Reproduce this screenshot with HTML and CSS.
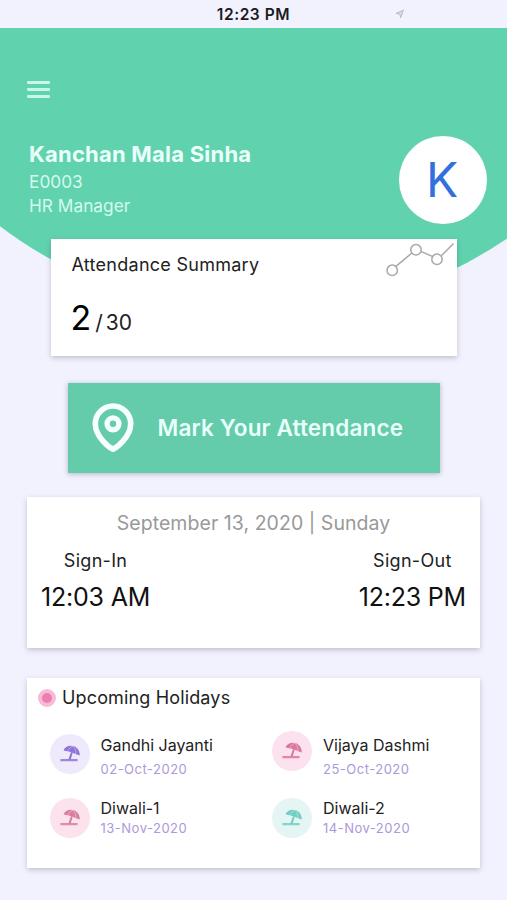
FILE: index.html
```html
<!DOCTYPE html>
<html lang="en">
<head>
  <meta charset="UTF-8">
  <meta name="viewport" content="width=device-width, initial-scale=1.0">
  <title>Attendance</title>
  <link rel="stylesheet" href="styles.css">
</head>
<body>
  <!-- Umbrella icon shared by the holiday list -->
  <svg class="icon-defs" width="0" height="0">
    <symbol id="umbrella" viewBox="0 0 20 18">
      <path d="M3.800 4.600C6 .8 10.200-.2 14 1.300c3.800 1.500 6 5.200 5.700 9.300l-4.200-1.600-2.400-.9-3.300-1.300-6-1.200z"/>
      <path d="M8 5.900C9 3.500 10.800 1.900 12.900 1.300M15.600 8.900c.7-2.800-.3-5.600-2.300-7.400" fill="none" stroke="#fff" stroke-width=".7" opacity=".55"/>
      <path d="M11 7l1.700.7-2.100 7H8.300z"/>
      <rect x=".4" y="14" width="17.200" height="2.200" rx=".5" opacity=".85"/>
    </symbol>
  </svg>

  <div class="status-bar">
    <span class="status-time">12:23 PM</span>
    <svg class="location-arrow" width="10" height="10" viewBox="0 0 10 10">
      <path d="M8.500 1L1 4.400l3.800.8.900 3.600z" fill="#d9d9e0" stroke="#b4b4bc" stroke-width=".8"/>
    </svg>
  </div>

  <header class="header">
    <button class="menu-button" aria-label="Menu">
      <span></span>
      <span></span>
      <span></span>
    </button>
    <div class="profile">
      <div class="profile-details">
        <h1>Kanchan Mala Sinha</h1>
        <p class="emp-id">E0003</p>
        <p class="emp-role">HR Manager</p>
      </div>
      <div class="avatar">K</div>
    </div>
  </header>

  <main>
    <!-- Attendance Summary -->
    <section class="card summary-card">
      <div class="summary-details">
        <h2>Attendance Summary</h2>
        <p class="summary-count"><span class="present">2</span><span class="slash">/</span><span class="total">30</span></p>
      </div>
      <svg class="chart-icon" width="70" height="38" viewBox="0 0 70 38" fill="none" stroke="#a9a9a9" stroke-width="1.500">
        <path d="M9.900 27.400L25.900 14M34.900 12.400l12 5.200M55.600 16.500L67.500 4.500"/>
        <circle cx="6.200" cy="31.300" r="5.200"/>
        <circle cx="30" cy="10.800" r="5.200"/>
        <circle cx="51" cy="20.300" r="5.200"/>
      </svg>
    </section>

    <button class="mark-button">
      <svg width="42" height="50" viewBox="0 0 42 50" fill="none" stroke="#f6ffff">
        <path d="M21 46.300C17.500 44.500 3.300 34 3.300 20.700a17.700 17.700 0 0 1 35.400 0C38.700 34 24.500 44.500 21 46.300z" stroke-width="5.600" stroke-linejoin="round"/>
        <circle cx="21" cy="20.800" r="5.900" stroke-width="5.400"/>
      </svg>
      <span>Mark Your Attendance</span>
    </button>

    <!-- Sign in / Sign out times -->
    <section class="card time-card">
      <p class="date">September 13, 2020 | Sunday</p>
      <div class="times">
        <div class="time">
          <p class="time-label">Sign-In</p>
          <p class="time-value">12:03 AM</p>
        </div>
        <div class="time">
          <p class="time-label">Sign-Out</p>
          <p class="time-value">12:23 PM</p>
        </div>
      </div>
    </section>

    <!-- Upcoming Holidays -->
    <section class="card holiday-card">
      <h2><span class="dot"></span>Upcoming Holidays</h2>
      <ul class="holiday-list">
        <li class="holiday">
          <span class="holiday-icon purple"><svg width="20" height="18"><use href="#umbrella"/></svg></span>
          <div>
            <h3>Gandhi Jayanti</h3>
            <p>02-Oct-2020</p>
          </div>
        </li>
        <li class="holiday raised">
          <span class="holiday-icon pink"><svg width="20" height="18"><use href="#umbrella"/></svg></span>
          <div>
            <h3>Vijaya Dashmi</h3>
            <p>25-Oct-2020</p>
          </div>
        </li>
        <li class="holiday compact">
          <span class="holiday-icon rose"><svg width="20" height="18"><use href="#umbrella"/></svg></span>
          <div>
            <h3>Diwali-1</h3>
            <p>13-Nov-2020</p>
          </div>
        </li>
        <li class="holiday compact">
          <span class="holiday-icon teal"><svg width="20" height="18"><use href="#umbrella"/></svg></span>
          <div>
            <h3>Diwali-2</h3>
            <p>14-Nov-2020</p>
          </div>
        </li>
      </ul>
    </section>
  </main>
</body>
</html>
```
FILE: styles.css
```css
* {
  box-sizing: border-box;
  margin: 0;
  padding: 0;
}

body {
  height: 900px;
  overflow: hidden;
  font-family: Inter, "Liberation Sans", sans-serif;
  background-color: #f2f2fe;
  color: #222;
}

h1, h2, h3, p, span {
  white-space: nowrap;
}

button {
  border: none;
  font-family: inherit;
  cursor: pointer;
}

.icon-defs {
  position: absolute;
}

/* Status bar */
.status-bar {
  display: grid;
  grid-template-columns: 1fr auto 1fr;
  align-items: center;
  height: 28px;
}

.status-time {
  grid-column: 2;
  padding-top: 2px;
  font-size: 15.5px;
  font-weight: 600;
  line-height: 26px;
  letter-spacing: 0.55px;
  color: #1b1b20;
}

.location-arrow {
  margin-left: 105px;
}

/* Header with curved bottom edge */
.header {
  height: 290px;
  padding: 53px 20px 0 27px;
  background-color: #60d2ae;
  clip-path: circle(435px at 262px -149px);
}

.menu-button {
  display: flex;
  flex-direction: column;
  gap: 4px;
  width: 23px;
  background: none;
}

.menu-button span {
  width: 23px;
  height: 3px;
  border-radius: 1px;
  background-color: #c9f7e7;
}

.profile {
  display: flex;
  justify-content: space-between;
  margin-top: 37.500px;
}

.profile-details {
  padding: 4.500px 0 0 2px;
  color: #d5faed;
}

.profile h1 {
  font-size: 22px;
  font-weight: 700;
  line-height: 28px;
  letter-spacing: 0.22px;
  color: #ebfffa;
}

.emp-id, .emp-role {
  font-size: 17.300px;
  line-height: 24px;
}

.emp-id {
  padding-top: 2px;
}

.avatar {
  width: 88px;
  height: 88px;
  border-radius: 50%;
  background-color: #fff;
  font-size: 48px;
  line-height: 88px;
  text-align: center;
  text-indent: -2px;
  color: #3470dc;
}

.card {
  background-color: #fff;
  box-shadow: 0 2px 5px rgba(60, 60, 90, 0.28);
}

/* Pulled up so the first card overlaps the header curve */
main {
  position: relative;
  display: flex;
  flex-direction: column;
  align-items: center;
  margin-top: -79px;
}

/* Attendance summary */
.summary-card {
  display: flex;
  justify-content: space-between;
  width: 406px;
  height: 117px;
  padding: 0 1px 0 21px;
}

.summary-card h2 {
  margin-top: 14px;
  font-size: 18px;
  font-weight: 400;
  line-height: 24px;
  letter-spacing: 0.27px;
}

.summary-count {
  display: flex;
  align-items: baseline;
  margin-top: 21px;
  line-height: 40px;
}

.present {
  margin-left: -1px;
  font-size: 34px;
  color: #000;
}

.slash {
  margin-left: 4px;
  font-size: 21px;
}

.total {
  margin-left: 3px;
  font-size: 21px;
}

/* Mark attendance button */
.mark-button {
  display: flex;
  align-items: center;
  gap: 24px;
  width: 372px;
  height: 90px;
  margin-top: 27px;
  padding-left: 24px;
  background-color: #64cbab;
  box-shadow: 0 1px 5px rgba(60, 60, 90, 0.35);
  font-size: 22.500px;
  font-weight: 600;
  letter-spacing: 0.17px;
  color: #e9fffa;
}

.mark-button span {
  padding-bottom: 2px;
}

/* Sign in and sign out */
.time-card {
  width: 453px;
  height: 151px;
  margin-top: 24px;
  padding: 13px 14px 0 14px;
}

.date {
  font-size: 19.500px;
  line-height: 26px;
  letter-spacing: 0.05px;
  text-align: center;
  color: #999;
}

.times {
  display: flex;
  justify-content: space-between;
  margin-top: 12px;
  text-align: center;
}

.time-label {
  font-size: 18px;
  line-height: 26px;
  letter-spacing: 0.3px;
}

.time-value {
  margin-top: 6px;
  font-size: 25px;
  line-height: 34px;
  letter-spacing: -0.2px;
  color: #111;
}

/* Holidays */
.holiday-card {
  width: 453px;
  height: 190px;
  margin-top: 30px;
  padding: 7px 10px 0 11px;
}

.holiday-card h2 {
  display: flex;
  align-items: center;
  gap: 6px;
  font-size: 18px;
  font-weight: 400;
  line-height: 26px;
  letter-spacing: 0.15px;
}

.dot {
  width: 18px;
  height: 18px;
  border: 4px solid #f8bad7;
  border-radius: 50%;
  background-color: #ed7fb0;
}

.holiday-list {
  display: grid;
  grid-template-columns: 222.500px 1fr;
  grid-template-rows: 63px 42px;
  margin-top: 23px;
  padding-left: 11.500px;
  list-style-type: none;
}

.holiday {
  display: flex;
  gap: 11px;
}

.holiday-icon {
  display: flex;
  align-items: center;
  justify-content: center;
  width: 40px;
  height: 40px;
  border-radius: 50%;
}

.holiday-icon svg {
  fill: currentColor;
}

.holiday h3 {
  font-size: 16px;
  font-weight: 400;
  line-height: 22px;
}

.holiday p {
  margin-top: 3px;
  font-size: 13px;
  line-height: 20px;
  letter-spacing: 0.5px;
  color: #ac98da;
}

.raised .holiday-icon {
  margin-top: -3px;
}

.compact .holiday-icon {
  margin-top: 1px;
}

.compact p {
  margin-top: -1px;
}

.purple {
  background-color: #efeafb;
  color: #8d74db;
}

.pink {
  background-color: #fbe2ee;
  color: #dc779e;
}

.rose {
  background-color: #fbe2ec;
  color: #d87f9f;
}

.teal {
  background-color: #e5f5f4;
  color: #72cec3;
}
```
